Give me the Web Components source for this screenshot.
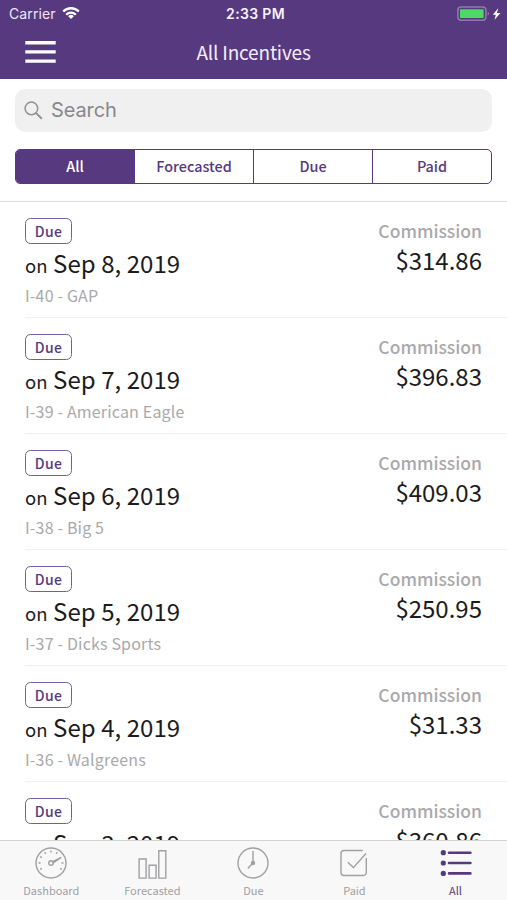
<!DOCTYPE html>
<html lang="en">
<head>
<meta charset="utf-8">
<title>All Incentives</title>
<style>
html, body { margin: 0; height: 100%; background: #fff; overflow: hidden; }
body { --brand: #573980; font-family: "Noto Sans CJK SC", "Noto Sans", sans-serif; color: #1c1b20; }
</style>
</head>
<body>
<incentives-app></incentives-app>
<script>
const define = (name, html) => customElements.define(name, class extends HTMLElement {
  connectedCallback() {
    if (this.shadowRoot) return;
    this.attachShadow({ mode: 'open' }).innerHTML = html(this);
  }
});

define('status-bar', () => `
<style>
:host { display: grid; grid-template-columns: 1fr auto 1fr; height: 27px; line-height: 27px; padding: 0 5px 0 9px; color: #eee7f6; font-family: Inter, sans-serif; font-size: 14px; align-items: center; }
.left { display: flex; gap: 6px; align-items: center; }
.left span { letter-spacing: .1px; }
.left svg { margin-top: -1px; }
.time { font-weight: 600; letter-spacing: .33px; color: #f6f1fb; }
.right { display: flex; justify-content: flex-end; align-items: center; }
svg { display: block; }
</style>
<div class="left"><span>Carrier</span>
<svg width="18" height="14" viewBox="0 0 18 14"><g fill="none" stroke="#fff" stroke-width="2.3"><path d="M1.2 5.5a11 11 0 0 1 15.6 0"/><path d="M4.2 8.7a6.8 6.8 0 0 1 9.6 0"/></g><path d="M9 13 6.2 10.2a4 4 0 0 1 5.6 0z" fill="#fff"/></svg></div>
<div class="time">2:33 PM</div>
<div class="right"><svg width="45" height="16" viewBox="0 0 45 16"><rect x=".9" y="1.1" width="28" height="13.2" rx="3.2" fill="none" stroke="#8f7aab" stroke-width="1.5"/><rect x="3" y="3.3" width="23.6" height="8.8" rx=".8" fill="#4cd964"/><path d="M30.7 5.6q2.6 2.2 0 4.4z" fill="#8f7aab"/><path d="M41.2 2.2 35.8 8.8h3l-1.2 5L43.4 7h-3.4z" fill="#fff"/></svg></div>`);

define('nav-bar', () => `
<style>
:host { display: grid; grid-template-columns: 1fr auto 1fr; align-items: start; height: 52px; padding: 0 25px; color: #f3edfa; }
.menu { display: block; padding-top: 14px; }
h1 { margin: 0; font-size: 19px; font-weight: 400; line-height: 50px; letter-spacing: -.18px; }
</style>
<svg class="menu" width="31" height="23" viewBox="0 0 31 23" fill="#fff"><path d="M.3 0h30.4v3.4H.3zM.3 9.2h30.4v3.4H.3zM.3 18.4h30.4v3.4H.3z"/></svg><h1><slot></slot></h1>`);

define('search-field', () => `
<style>
:host { display: flex; align-items: center; height: 43px; border-radius: 10px; background: #f0f0f1; color: #88888c; font: 20px/43px Inter, sans-serif; padding-left: 9px; gap: 8px; }
svg { display: block; }
span { letter-spacing: -.1px; }
</style>
<svg width="19" height="19" viewBox="0 0 19 19" fill="none" stroke="#919195" stroke-width="1.5"><circle cx="7.4" cy="7.4" r="6.3"/><path d="m11.9 11.9 5.9 5.9" stroke-width="2"/></svg><span><slot></slot></span>`);

define('segment-item', () => `
<style>
:host { display: block; flex: 1; text-align: center; font-size: 14.4px; font-weight: 500; line-height: 32px; height: 33px; color: var(--brand); border-left: 1.3px solid var(--brand); }
:host(:first-child) { border-left: 0; }
:host([selected]) { background: var(--brand); color: #fff; }
</style><slot></slot>`);

define('segment-control', () => `
<style>
:host { display: flex; box-sizing: border-box; height: 35px; border: 1.3px solid var(--brand); border-radius: 5px; overflow: hidden; }
</style><slot></slot>`);

define('status-badge', () => `
<style>
:host { display: block; box-sizing: border-box; width: 47px; height: 26px; border: 1.5px solid #765f9c; border-radius: 5.5px; text-align: center; font-size: 14px; font-weight: 500; line-height: 24px; letter-spacing: .3px; color: var(--brand); }
</style><slot></slot>`);

define('incentive-row', el => `
<style>
:host { display: flex; justify-content: space-between; box-sizing: border-box; height: 116px; margin-left: 25px; padding-right: 25px; border-bottom: 1px solid #f1f1f2; white-space: nowrap; }
.info { padding-top: 16px; }
.date { font-size: 24px; line-height: 38px; letter-spacing: .06px; }
.date small { font-size: 18.5px; }
.ref { font-size: 16px; line-height: 22px; letter-spacing: .17px; color: #a9a9ab; }
.pay { text-align: right; padding-top: 14px; }
.label { font-size: 17.5px; line-height: 30px; font-weight: 500; color: #a9a9ac; }
.amount { font-size: 24px; line-height: 27px; }
</style>
<div class="info"><status-badge>Due</status-badge><div class="date"><small>on</small> ${el.getAttribute('date')}</div><div class="ref"><slot></slot></div></div>
<div class="pay"><div class="label">Commission</div><div class="amount">${el.getAttribute('amount')}</div></div>`);

const icons = {
  gauge: `<circle cx="18" cy="18" r="15"/><circle cx="18" cy="18" r="2.2"/><path d="m19.8 16.6 8.4-4.3-7.8 5.4z" fill="currentColor"/><path d="M18 5.5v2M11.7 7.2l1 1.7M7.2 11.7l1.7 1M5.5 18h2M7.2 24.3l1.7-1M24.3 7.2l-1 1.7M28.5 18h2M28.8 24.3l-1.7-1"/>`,
  bars: `<path d="M5.1 14h7v19.1h-7zM15.1 20.3h7v12.8h-7zM24.8 5.8h7v27.3h-7z"/>`,
  clock: `<circle cx="18" cy="18" r="15"/><path d="M18 6v11M17.2 18.8l-4.4 4.6"/><circle cx="18" cy="18" r="1.5" fill="currentColor"/>`,
  check: `<path d="M26.7 5.5H8a3 3 0 0 0-3 3v19a3 3 0 0 0 3 3h19.3a3 3 0 0 0 3-3V13"/><path d="m11.8 17.3 5.6 5.3L30 8.5"/>`,
  list: `<g fill="currentColor" stroke="none"><circle cx="5.3" cy="7.7" r="2.6"/><circle cx="5.3" cy="18" r="2.6"/><circle cx="5.3" cy="28.4" r="2.6"/></g><path d="M11 7.7h21.4M11 18h21.4M11 28.4h21.4" stroke-width="2.6" stroke-linecap="round"/>`
};
define('tab-item', el => `
<style>
:host { display: flex; flex-direction: column; align-items: center; flex: 1; color: #a0a0a3; font-size: 11px; line-height: 16px; padding-top: 4px; }
:host([selected]) { color: var(--brand); }
svg { display: block; }
</style>
<svg width="36" height="37" viewBox="0 0 36 37" fill="none" stroke="currentColor" stroke-width="1.4">${icons[el.getAttribute('icon')]}</svg><span><slot></slot></span>`);

define('tab-bar', () => `
<style>
:host { display: flex; box-sizing: border-box; height: 60px; padding: 0 1px .0px .8px; background: #f8f8f8; border-top: 1px solid #d4d4d5; }
</style><slot></slot>`);

define('incentives-app', () => `
<style>
:host { display: grid; grid-template-rows: 79px 123px 1fr 60px; height: 900px; width: 507px; overflow: hidden; }
header { background: var(--brand); }
.filters { box-sizing: border-box; padding: 10px 15px 0; border-bottom: 1px solid #dfdfe0; }
segment-control { margin-top: 17px; }
main { overflow: hidden; min-height: 0; }
</style>
<header><status-bar></status-bar><nav-bar>All Incentives</nav-bar></header>
<div class="filters"><search-field>Search</search-field>
<segment-control><segment-item selected>All</segment-item><segment-item>Forecasted</segment-item><segment-item>Due</segment-item><segment-item>Paid</segment-item></segment-control></div>
<main>
<incentive-row date="Sep 8, 2019" amount="$314.86">I-40 - GAP</incentive-row>
<incentive-row date="Sep 7, 2019" amount="$396.83">I-39 - American Eagle</incentive-row>
<incentive-row date="Sep 6, 2019" amount="$409.03">I-38 - Big 5</incentive-row>
<incentive-row date="Sep 5, 2019" amount="$250.95">I-37 - Dicks Sports</incentive-row>
<incentive-row date="Sep 4, 2019" amount="$31.33">I-36 - Walgreens</incentive-row>
<incentive-row date="Sep 3, 2019" amount="$360.86"></incentive-row>
</main>
<tab-bar><tab-item icon="gauge">Dashboard</tab-item><tab-item icon="bars">Forecasted</tab-item><tab-item icon="clock">Due</tab-item><tab-item icon="check">Paid</tab-item><tab-item icon="list" selected>All</tab-item></tab-bar>`);
</script>
</body>
</html>
